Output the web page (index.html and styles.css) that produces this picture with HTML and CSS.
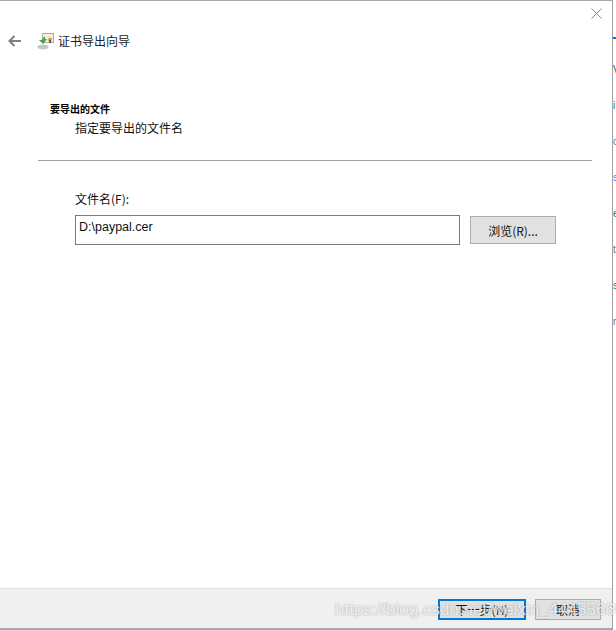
FILE: index.html
```html
<!DOCTYPE html>
<html lang="zh">
<head>
<meta charset="utf-8">
<title>证书导出向导</title>
<link rel="stylesheet" href="styles.css">
</head>
<body>
<div class="screen">
  <main class="dialog">
    <div class="close-row">
      <svg class="close" width="11" height="11" viewBox="0 0 11 11"><path d="M.5.5l10 10M10.500.5l-10 10" stroke="#8a8a8a" stroke-width="1" fill="none"/></svg>
    </div>
    <header class="title-row">
      <svg class="back" width="14" height="12" viewBox="0 0 14 12"><path d="M13 6H2M6.500 1L1.500 6l5 5" stroke="#7f7f7f" stroke-width="2" fill="none"/></svg>
      <svg class="wizard" width="17" height="17" viewBox="0 0 17 17">
        <rect x="5.500" y=".5" width="11" height="9" fill="#f3efe2" stroke="#b5ad94"/>
        <circle cx="13" cy="6.500" r="2" fill="#e0a020"/>
        <rect x="12" y="7" width="2" height="3" fill="#3a66b0"/>
        <ellipse cx="6" cy="14" rx="5.500" ry="2.500" fill="#c4c6c8"/>
        <path d="M8 3v3h2l-4 5-4-4h3l2-3z" fill="#3fa83c"/>
      </svg>
      <h1 class="title">证书导出向导</h1>
    </header>
    <section class="intro">
      <h2 class="heading">要导出的文件</h2>
      <p class="subheading">指定要导出的文件名</p>
    </section>
    <hr class="rule">
    <form class="file-form">
      <label class="file-label" for="file">文件名(F):</label>
      <div class="file-row">
        <input class="file-input" id="file" type="text" value="D:\paypal.cer">
        <button class="btn browse" type="button">浏览(R)...</button>
      </div>
    </form>
    <footer class="actions">
      <button class="btn next" type="button">下一步(N)</button>
      <button class="btn cancel" type="button">取消</button>
    </footer>
  </main>
  <aside class="behind">
    <span class="frag frag-blue"></span>
    <span class="frag frag-dark">V</span>
    <span class="frag frag-green">i</span>
    <span class="frag frag-grey">c</span>
    <span class="frag frag-link">s</span>
    <span class="frag frag-green">e</span>
    <span class="frag frag-grey">t</span>
    <span class="frag frag-green">s</span>
    <span class="frag frag-grey">n</span>
  </aside>
  <div class="watermark">https://blog.csdn.net/weixin_44455669</div>
</div>
</body>
</html>
```
FILE: styles.css
```css
* { box-sizing: border-box; }
html, body { margin: 0; padding: 0; background: #fff; }
body { font-family: "Noto Sans CJK SC", "Liberation Sans", sans-serif; color: #000; }
.screen { position: relative; display: flex; width: 616px; height: 630px; overflow: hidden; }
.dialog {
  width: 613px; height: 630px; display: flex; flex-direction: column;
  background: #fff; border-top: 1px solid #a8a8a8; border-right: 1px solid #a0a0a0; border-bottom: 2px solid #a8a8a8;
}
.close-row { height: 24px; padding: 7px 9px 0 0; display: flex; justify-content: flex-end; flex: none; }
.close { display: block; margin-right: 1px; }
.title-row { height: 32px; display: flex; align-items: center; padding-left: 8px; flex: none; }
.back { display: block; }
.wizard { display: block; margin-left: 15px; }
.title { margin: 0 0 0 4px; font-size: 12px; font-weight: 400; color: #222; line-height: 16px; }
.intro { padding: 45px 0 0 50px; flex: none; }
.heading { margin: 0; font-size: 10px; line-height: 14px; font-weight: 700; color: #000; }
.subheading { margin: 4px 0 0 25px; font-size: 12px; line-height: 16px; color: #111; }
.rule { margin: 24px 20px 0 38px; border: 0; border-top: 1px solid #a0a0a0; height: 1px; flex: none; }
.file-form { padding: 30px 0 0 75px; flex: none; }
.file-label { display: block; font-size: 12px; line-height: 16px; color: #111; }
.file-row { display: flex; align-items: center; margin-top: 8px; }
.file-input {
  width: 385px; height: 30px; padding: 0 0 6px 3px; border: 1px solid #7a7a7a; border-radius: 0;
  background: #fff; font-family: "Liberation Sans", sans-serif; font-size: 12.500px; color: #111; outline: none;
}
.btn {
  display: block; padding: 0; border: 1px solid #adadad; border-radius: 0; background: #e1e1e1;
  font-family: "Noto Sans CJK SC", "Liberation Sans", sans-serif; font-size: 12px; color: #111;
}
.browse { width: 86px; height: 28px; margin-left: 10px; }
.actions {
  margin-top: auto; height: 40px; flex: none; display: flex; align-items: flex-start; justify-content: flex-end;
  gap: 9px; padding: 10px 11px 0 0; background: #f0f0f0; border-top: 1px solid #dfdfdf;
}
.next { width: 88px; height: 21px; border: 2px solid #0078d7; }
.cancel { width: 66px; height: 21px; }
.behind {
  width: 3px; height: 630px; flex: none; display: flex; flex-direction: column; gap: 26px;
  padding-top: 37px; background: #fff; overflow: hidden; font-family: "Liberation Sans", sans-serif; font-size: 10px; line-height: 10px;
}
.frag { display: block; height: 10px; width: 3px; overflow: hidden; }
.frag-blue { height: 2px; background: #1a6fc9; }
.frag-dark { color: #444; }
.frag-green { color: #1d7a50; }
.frag-grey { color: #777; }
.frag-link { color: #4a78d8; }
.watermark {
  position: absolute; left: 335px; top: 600px; font-family: "Liberation Sans", sans-serif; font-size: 17px; line-height: 20px;
  white-space: nowrap; color: rgba(255,255,255,.75); text-shadow: 0 0 2px rgba(90,90,90,.55);
}
```
